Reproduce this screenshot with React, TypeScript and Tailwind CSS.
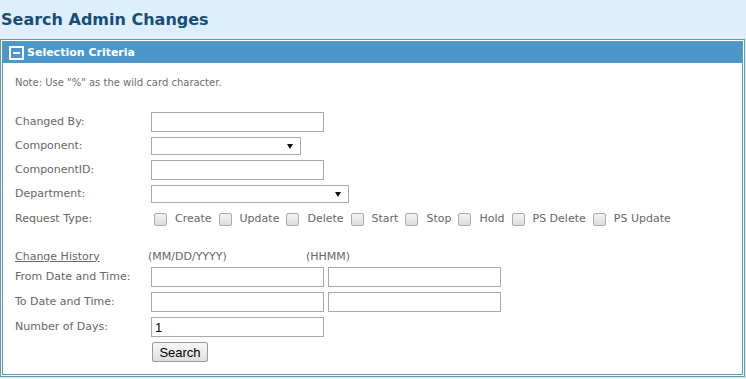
import React from "react";

const labelCls = "w-[136px] shrink-0 text-[11px] text-[#666]";
const inputCls =
  "h-[20px] w-[173px] border border-[#a9a9a9] bg-white px-[3px] text-[13px] text-black outline-none";

const requestTypes = ["Create", "Update", "Delete", "Start", "Stop", "Hold", "PS Delete", "PS Update"];

const FakeSelect: React.FC<{ width: string }> = ({ width }) => (
  <div className={`relative h-[18px] border border-[#a9a9a9] bg-white ${width}`}>
    <svg
      className="absolute right-[7px] top-[6px]"
      width="6"
      height="5"
      viewBox="0 0 6 5"
    >
      <path d="M0 0 L6 0 L3 5 Z" fill="#111" />
    </svg>
  </div>
);

const CheckBox: React.FC = () => (
  <span className="inline-block h-[13px] w-[13px] shrink-0 rounded-[2px] border border-[#ababab] bg-gradient-to-b from-[#f3f3f3] to-[#dcdcdc]" />
);

export default function App() {
  return (
    <div
      className="h-[379px] w-[746px] overflow-hidden bg-[#ddeefc]"
      style={{ fontFamily: '"DejaVu Sans", Verdana, sans-serif' }}
    >
      {/* page title */}
      <h1 className="h-[39px] pl-px text-[16px] font-bold leading-[39px] text-[#194d76]">
        Search Admin Changes
      </h1>

      {/* selection panel */}
      <div className="h-[338px] w-[745px] border-[3px] border-double border-[#5f9bab] bg-white">
        <div className="flex h-[21px] items-center bg-[#4b97c9] pl-[6px]">
          <span className="mr-[3px] flex h-[14px] w-[15px] items-center justify-center border-2 border-white">
            <span className="h-[2px] w-[7px] bg-white" />
          </span>
          <span className="text-[11px] font-bold leading-[21px] text-white">Selection Criteria</span>
        </div>

        <div className="pl-[12px] pt-[13px]">
          <p className="h-[14px] text-[10px] leading-[14px] text-[#6e6e6e]">
            Note: Use "%" as the wild card character.
          </p>

          <div className="mt-[22px] flex flex-col gap-[4px]">
            <div className="flex h-[20px] items-center">
              <span className={labelCls}>Changed By:</span>
              <input className={inputCls} />
            </div>
            <div className="flex h-[20px] items-center">
              <span className={labelCls}>Component:</span>
              <FakeSelect width="w-[150px]" />
            </div>
            <div className="flex h-[20px] items-center">
              <span className={labelCls}>ComponentID:</span>
              <input className={inputCls} />
            </div>
            <div className="flex h-[20px] items-center">
              <span className={labelCls}>Department:</span>
              <FakeSelect width="w-[198px]" />
            </div>
            <div className="flex h-[20px] items-center pt-[2px]">
              <span className={labelCls}>Request Type:</span>
              <div className="ml-[3px] flex items-center gap-[7px] text-[11px] text-[#666]">
                {requestTypes.map((t) => (
                  <span key={t} className="flex items-center gap-[8px]">
                    <CheckBox />
                    <span>{t}</span>
                  </span>
                ))}
              </div>
            </div>
          </div>

          <div className="mt-[19px] flex h-[20px] items-center text-[11px] text-[#666]">
            <span className="w-[133px] shrink-0 underline">Change History</span>
            <span className="w-[158px] shrink-0">(MM/DD/YYYY)</span>
            <span>(HHMM)</span>
          </div>

          <div className="flex flex-col gap-[5px]">
            <div className="flex h-[20px] items-center">
              <span className={labelCls}>From Date and Time:</span>
              <input className={inputCls} />
              <input className={`${inputCls} ml-[4px]`} />
            </div>
            <div className="flex h-[20px] items-center">
              <span className={labelCls}>To Date and Time:</span>
              <input className={inputCls} />
              <input className={`${inputCls} ml-[4px]`} />
            </div>
            <div className="flex h-[20px] items-center">
              <span className={labelCls}>Number of Days:</span>
              <input
                className={inputCls}
                defaultValue="1"
                style={{ fontFamily: '"Liberation Sans", Arial, sans-serif' }}
              />
            </div>
            <div className="flex h-[20px] items-center">
              <span className={labelCls} />
              <button
                className="ml-px h-[20px] w-[56px] rounded-[2px] border border-[#9a9a9a] bg-gradient-to-b from-[#f7f7f7] to-[#dedede] text-[13px] text-black"
                style={{ fontFamily: '"Liberation Sans", Arial, sans-serif' }}
              >
                Search
              </button>
            </div>
          </div>
        </div>
      </div>
    </div>
  );
}
